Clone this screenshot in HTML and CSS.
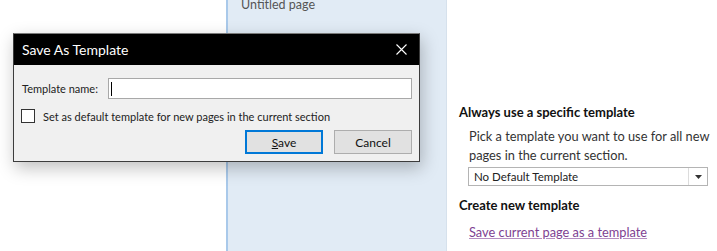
FILE: index.html
```html
<!DOCTYPE html>
<html lang="en">
<head>
  <meta charset="UTF-8">
  <meta name="viewport" content="width=device-width, initial-scale=1.0">
  <title>Save As Template</title>
  <link rel="stylesheet" href="styles.css">
</head>
<body>
  <div class="app">
    <div class="canvas"></div>
    <aside class="pages">
      <div class="pages__item">Untitled page</div>
    </aside>
    <section class="templates">
      <h3 class="templates__title">Always use a specific template</h3>
      <p class="templates__text">Pick a template you want to use for all new pages in the current section.</p>
      <div class="select">
        <span class="select__value">No Default Template</span>
        <span class="select__btn">
          <svg width="7" height="4" viewBox="0 0 7 4"><path d="M0 0h7L3.5 4z" fill="#333"/></svg>
        </span>
      </div>
      <h3 class="templates__title templates__title--new">Create new template</h3>
      <a class="templates__link" href="#">Save current page as a template</a>
    </section>
  </div>

  <div class="dialog">
    <div class="dialog__bar">
      <span class="dialog__title">Save As Template</span>
      <svg class="dialog__close" width="11" height="11" viewBox="0 0 11 11">
        <path d="M0.5 0.5l10 10M10.5 0.5l-10 10" stroke="#fff" stroke-width="1.1"/>
      </svg>
    </div>
    <div class="dialog__body">
      <div class="field">
        <label class="field__label">Template name:</label>
        <div class="field__input"><span class="caret"></span></div>
      </div>
      <div class="check">
        <span class="check__box"></span>
        <span>Set as default template for new pages in the current section</span>
      </div>
      <div class="dialog__actions">
        <button class="btn btn--default"><u>S</u>ave</button>
        <button class="btn">Cancel</button>
      </div>
    </div>
  </div>
</body>
</html>
```

FILE: styles.css
```css
* {
  margin: 0;
  padding: 0;
  box-sizing: border-box;
}

body {
  width: 717px;
  height: 251px;
  overflow: hidden;
  background: #fff;
  font-family: "Segoe UI", Lato, sans-serif;
  color: #222;
}

.app {
  display: flex;
  height: 251px;
}

.canvas {
  width: 226px;
  background: #fff;
}

.pages {
  width: 221px;
  background: #e1ebf5;
  border-left: 2px solid #a9c9ea;
  border-right: 1px solid #d6e1ec;
}

.pages__item {
  margin-top: -5px;
  padding-left: 13px;
  font-size: 12.5px;
  line-height: 20px;
  color: #555;
}

.templates {
  flex: 1;
  padding: 102px 2px 0 12px;
}

.templates__title {
  font-size: 13px;
  font-weight: bold;
  line-height: 20px;
  color: #111;
}

.templates__title--new {
  margin-top: 9px;
}

.templates__text {
  margin-top: 5px;
  padding-left: 10px;
  font-size: 12.8px;
  line-height: 19px;
  color: #333;
}

.select {
  display: flex;
  margin: 2px 0 0 9px;
  width: 240px;
  height: 19px;
  border: 1px solid #b4b4b4;
  background: #fff;
}

.select__value {
  flex: 1;
  padding-left: 5px;
  font-size: 11.5px;
  line-height: 17px;
  color: #222;
}

.select__btn {
  display: flex;
  align-items: center;
  justify-content: center;
  width: 19px;
  border-left: 1px solid #dcdcdc;
}

.templates__link {
  display: inline-block;
  margin: 7px 0 0 10px;
  font-size: 12.8px;
  line-height: 20px;
  color: #7e3f92;
  text-decoration: underline;
  text-decoration-color: #b58dc2;
}

/* dialog lies over the page */
.dialog {
  position: absolute;
  top: 33px;
  left: 13px;
  width: 407px;
  height: 129px;
  border: 1px solid #3c3c3c;
  border-top-color: #7a7a7a;
  background: #f0f0f0;
  box-shadow: 2px 6px 16px rgba(0, 0, 0, 0.25);
  font-size: 11px;
}

.dialog__bar {
  display: flex;
  align-items: center;
  justify-content: space-between;
  height: 31px;
  padding: 0 12px 0 8px;
  background: #000;
  color: #fff;
}

.dialog__title {
  font-size: 14px;
}

.dialog__body {
  padding: 13px 7px 0 7px;
}

.field {
  display: flex;
  align-items: center;
  gap: 10px;
  height: 21px;
}

.field__label {
  padding-left: 1px;
}

.field__input {
  flex: 1;
  height: 21px;
  border: 1px solid #a8a8a8;
  background: #fff;
  padding: 3px 0 0 2px;
}

.caret {
  display: block;
  width: 1px;
  height: 14px;
  background: #000;
}

.check {
  display: flex;
  align-items: center;
  gap: 8px;
  height: 14px;
  margin-top: 10px;
}

.check__box {
  width: 14px;
  height: 14px;
  border: 1px solid #333;
  background: #fff;
}

.dialog__actions {
  display: flex;
  justify-content: flex-end;
  gap: 11px;
  margin-top: 7px;
}

.btn {
  width: 78px;
  height: 24px;
  border: 1px solid #adadad;
  background: #e1e1e1;
  font-family: inherit;
  font-size: 12px;
  color: #111;
}

.btn--default {
  border: 2px solid #0078d7;
}
```
